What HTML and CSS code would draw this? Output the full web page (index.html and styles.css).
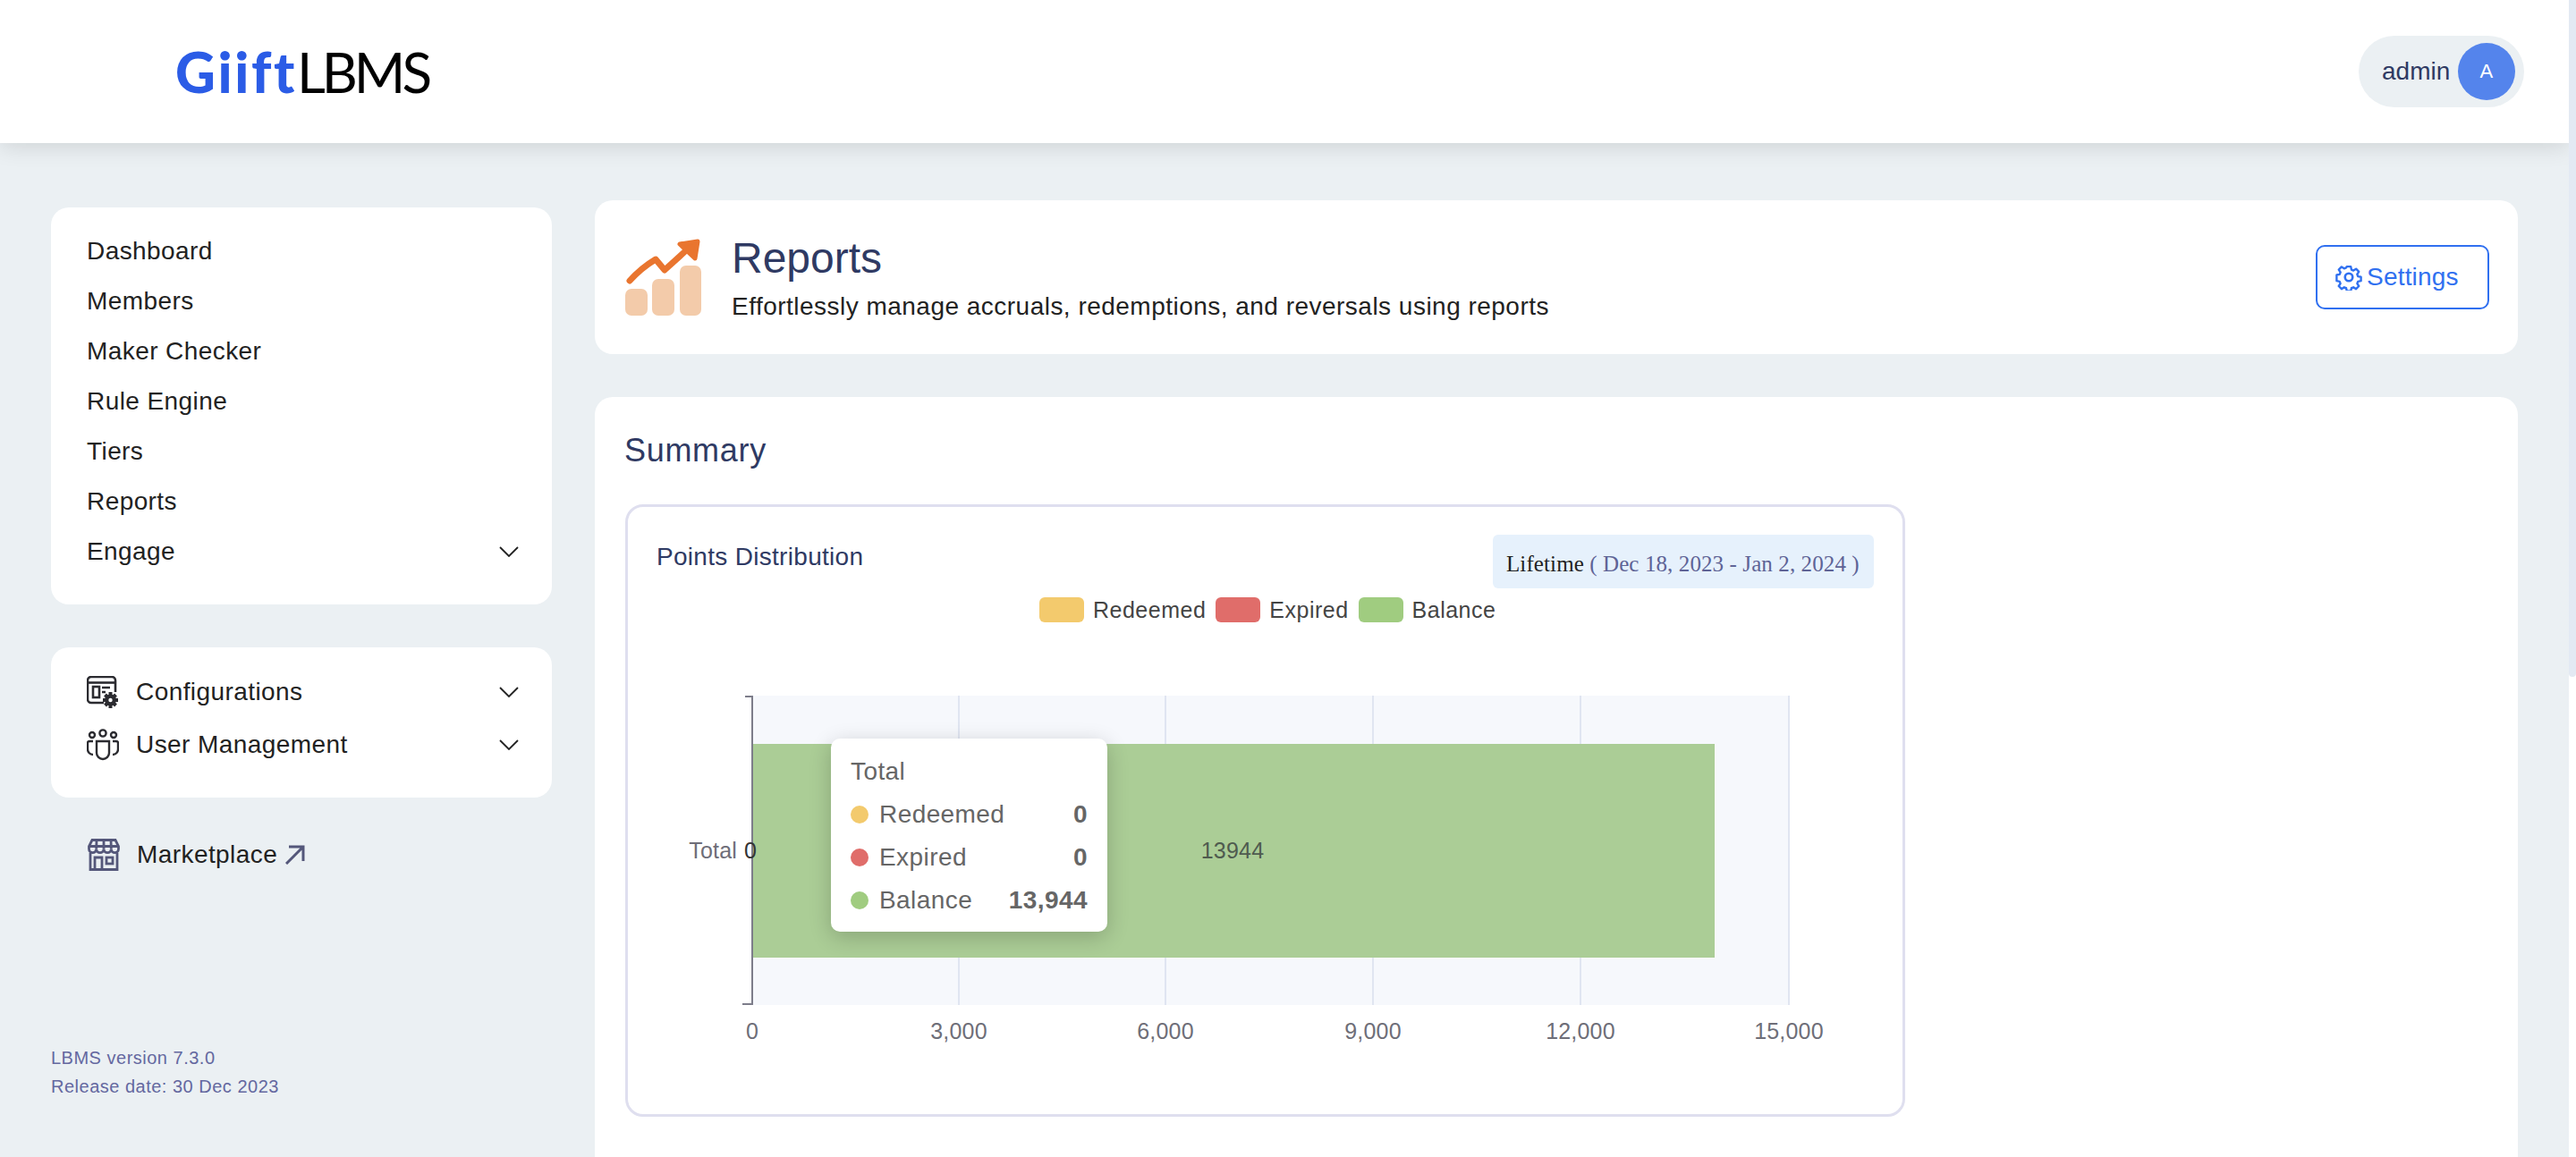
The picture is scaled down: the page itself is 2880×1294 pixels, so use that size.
FILE: index.html
```html
<!DOCTYPE html>
<html lang="en">
<head>
    <meta charset="UTF-8">
    <title>Reports</title>
    <link rel="stylesheet" href="styles.css">
</head>
<body>
<div class="page">
    <!-- header -->
    <header class="topbar">
        <div class="logo"><span class="logo-blue">Giift</span><span class="logo-black">LBMS</span></div>
        <div class="user-pill">
            <span class="user-name">admin</span>
            <span class="user-avatar">A</span>
        </div>
    </header>

    <div class="content">
        <!-- sidebar -->
        <aside class="sidebar">
            <nav class="side-card side-main">
                <a class="side-link">Dashboard</a>
                <a class="side-link">Members</a>
                <a class="side-link">Maker Checker</a>
                <a class="side-link">Rule Engine</a>
                <a class="side-link">Tiers</a>
                <a class="side-link">Reports</a>
                <a class="side-link">Engage
                    <svg class="chevron" viewBox="0 0 22 12"><path d="M1 1l10 10L21 1"/></svg>
                </a>
            </nav>

            <nav class="side-card side-config">
                <a class="side-link side-icon-link">
                    <svg class="side-icon" viewBox="0 0 36 36" fill="none" stroke="#2b2b30" stroke-width="2.600">
                        <path d="M19 30H5a4 4 0 0 1-4-4V5a4 4 0 0 1 4-4h23a4 4 0 0 1 4 4v13"/>
                        <path d="M1 7.500h31"/>
                        <rect x="7" y="12" width="7" height="12"/>
                        <path d="M17 13h9M17 18h4"/>
                        <path d="M26.500 18v18M18 27h17M20.500 21l12 12M32.500 21l-12 12" stroke="#2b2b30" stroke-width="4"/>
                        <circle cx="26.500" cy="27" r="6.500" fill="#2b2b30" stroke="none"/>
                        <circle cx="26.500" cy="27" r="2.200" fill="#fff" stroke="none"/>
                    </svg>
                    Configurations
                    <svg class="chevron" viewBox="0 0 22 12"><path d="M1 1l10 10L21 1"/></svg>
                </a>
                <a class="side-link side-icon-link">
                    <svg class="side-icon" viewBox="0 0 36 36" fill="none" stroke="#2b2b30" stroke-width="2.400">
                        <circle cx="18" cy="5" r="3.600"/>
                        <circle cx="6" cy="7" r="3"/>
                        <circle cx="30" cy="7" r="3"/>
                        <path d="M11 14h14v13a7 7 0 0 1-14 0z"/>
                        <path d="M7 14H3a2 2 0 0 0-2 2v7a6 6 0 0 0 6 6"/>
                        <path d="M29 14h4a2 2 0 0 1 2 2v7a6 6 0 0 1-6 6"/>
                    </svg>
                    User Management
                    <svg class="chevron" viewBox="0 0 22 12"><path d="M1 1l10 10L21 1"/></svg>
                </a>
            </nav>

            <a class="market-link">
                <svg class="side-icon" viewBox="0 0 36 36" fill="none" stroke="#54577a" stroke-width="2.800">
                    <path d="M5 1.500h26l3.500 7v3a4 4 0 0 1-8.200 0 4 4 0 0 1-8.300 0 4 4 0 0 1-8.300 0 4 4 0 0 1-8.200 0v-3z"/>
                    <path d="M1.500 8.500h33M10 1.500l-.3 10M18 1.500v10M26 1.500l.3 10"/>
                    <path d="M3 16v18.500h30V16"/>
                    <path d="M8 34.500V21h8v13.500"/>
                    <rect x="21" y="21" width="7" height="7"/>
                </svg>
                Marketplace
                <svg class="market-arrow" viewBox="0 0 22 22" fill="none" stroke="#54577a" stroke-width="3"><path d="M1 21L20 2M4 2h16v16"/></svg>
            </a>

            <div class="version">
                <div>LBMS version 7.3.0</div>
                <div>Release date: 30 Dec 2023</div>
            </div>
        </aside>

        <!-- main -->
        <main class="main">
            <section class="card page-head">
                <svg class="head-icon" viewBox="0 0 86 86">
                    <rect x="0" y="56" width="25" height="30" rx="7" fill="#f3cbaa"/>
                    <rect x="30" y="45" width="25" height="41" rx="7" fill="#f3cbaa"/>
                    <rect x="61" y="30" width="24" height="56" rx="7" fill="#f3cbaa"/>
                    <path d="M5 47C14 37 24 29 34 23l10 12 22-20" fill="none" stroke="#e9752f" stroke-width="7" stroke-linecap="round" stroke-linejoin="round"/>
                    <path d="M61 6l20-3-3 19z" fill="#e9752f" stroke="#e9752f" stroke-width="5" stroke-linejoin="round"/>
                </svg>
                <div class="head-text">
                    <h1 class="head-title">Reports</h1>
                    <p class="head-sub">Effortlessly manage accruals, redemptions, and reversals using reports</p>
                </div>
                <button class="settings-btn">
                    <svg class="gear" viewBox="0 0 24 24" fill="none" stroke="#3070f0" stroke-width="2.100" stroke-linejoin="round">
                        <path d="M10 1.500h4l.6 3 2 .9 2.600-1.700 2.800 2.900-1.700 2.500.8 2.100 3 .6v3.900l-3 .6-.8 2 1.700 2.600-2.800 2.800-2.600-1.700-2 .8-.6 3h-4l-.6-3-2-.8-2.600 1.700-2.800-2.800 1.700-2.600-.8-2-3-.6V9.800l3-.6.800-2.100-1.700-2.500 2.800-2.900 2.600 1.700 2-.9z" transform="translate(1.200 1.200) scale(.9)"/>
                        <circle cx="12" cy="12" r="3.400"/>
                    </svg>
                    Settings
                </button>
            </section>

            <section class="card summary">
                <h2 class="summary-title">Summary</h2>
                <div class="chart-card">
                    <div class="chart-top">
                        <div class="chart-title">Points Distribution</div>
                        <div class="date-box">Lifetime <span class="date-range">( Dec 18, 2023 - Jan 2, 2024 )</span></div>
                    </div>
                    <div class="legend">
                        <span class="swatch swatch-yellow"></span><span class="legend-label">Redeemed</span>
                        <span class="swatch swatch-red"></span><span class="legend-label">Expired</span>
                        <span class="swatch swatch-green"></span><span class="legend-label">Balance</span>
                    </div>
                    <div class="chart-wrap">
                        <svg class="chart-svg" viewBox="0 0 1424 420" width="1424" height="420">
                            <rect x="139" y="0" width="1160" height="346" fill="#f6f8fc"/>
                            <path d="M370 0v346M601 0v346M833 0v346M1065 0v346M1298 0v346" stroke="#e0e5f1" stroke-width="2"/>
                            <rect x="138" y="54" width="1077" height="239" fill="#abcd96"/>
                            <path d="M139 0v346M131 1h8M128 345h11" stroke="#7d7d8a" stroke-width="2" fill="none"/>
                            <text class="chart-text" x="122" y="182" text-anchor="end">Total</text>
                            <text class="chart-text chart-zero" x="137" y="182" text-anchor="middle">0</text>
                            <text class="chart-text chart-value" x="676" y="182" text-anchor="middle">13944</text>
                            <text class="chart-text" x="139" y="384" text-anchor="middle">0</text>
                            <text class="chart-text" x="370" y="384" text-anchor="middle">3,000</text>
                            <text class="chart-text" x="601" y="384" text-anchor="middle">6,000</text>
                            <text class="chart-text" x="833" y="384" text-anchor="middle">9,000</text>
                            <text class="chart-text" x="1065" y="384" text-anchor="middle">12,000</text>
                            <text class="chart-text" x="1298" y="384" text-anchor="middle">15,000</text>
                        </svg>
                        <!-- tooltip sits over the bar -->
                        <div class="tooltip">
                            <div class="tip-title">Total</div>
                            <div class="tip-row"><span class="tip-dot swatch-yellow"></span><span class="tip-label">Redeemed</span><b class="tip-value">0</b></div>
                            <div class="tip-row"><span class="tip-dot swatch-red"></span><span class="tip-label">Expired</span><b class="tip-value">0</b></div>
                            <div class="tip-row"><span class="tip-dot swatch-green"></span><span class="tip-label">Balance</span><b class="tip-value">13,944</b></div>
                        </div>
                    </div>
                </div>
            </section>
        </main>
    </div>
</div>
<div class="scrollbar"><div class="scroll-thumb"></div></div>
</body>
</html>
```

FILE: styles.css
```css
*{
    margin: 0;
    padding: 0;
    box-sizing: border-box;
}
html, body{
    height: 100%;
    overflow: hidden;
}
body{
    display: flex;
    background-color: #ebf0f3;
    font-family: "Liberation Sans", Arial, sans-serif;
    font-size: 28px;
    letter-spacing: 0.42px;
    color: #222;
}
.page{
    flex: 1;
    min-width: 0;
    height: 100%;
    overflow: hidden;
}
.scrollbar{
    width: 8px;
    background-color: #fff;
}
.scroll-thumb{
    height: 757px;
    background-color: #e3e9f3;
    border-radius: 0 0 4px 4px;
}

/* header */
.topbar{
    height: 160px;
    background-color: #fff;
    box-shadow: 0 4px 24px rgba(0, 0, 0, 0.12);
    display: flex;
    align-items: center;
    justify-content: space-between;
    padding: 0 50px 0 196px;
    position: relative;
}
.logo{
    font-family: Lato, sans-serif;
    font-size: 62px;
    letter-spacing: 0;
    line-height: 1;
    display: flex;
}
.logo-blue{
    color: #2b5ce6;
    font-weight: 900;
    letter-spacing: 2.600px;
}
.logo-black{
    color: #000;
    font-weight: 400;
    letter-spacing: -4px;
}
.user-pill{
    width: 185px;
    height: 80px;
    border-radius: 40px;
    background-color: #ebf0f3;
    display: flex;
    align-items: center;
    justify-content: space-between;
    padding: 0 10px 0 26px;
}
.user-name{
    color: #2f3a63;
    letter-spacing: 0;
}
.user-avatar{
    width: 64px;
    height: 64px;
    border-radius: 50%;
    background-color: #5484ec;
    color: #fff;
    font-size: 22px;
    display: flex;
    align-items: center;
    justify-content: center;
}

/* layout */
.content{
    display: flex;
    align-items: flex-start;
    padding: 64px 57px 0;
    gap: 48px;
}
.sidebar{
    width: 560px;
    flex-shrink: 0;
    padding-top: 8px;
}
.main{
    flex: 1;
    min-width: 0;
}

/* sidebar */
.side-card{
    background-color: #fff;
    border-radius: 20px;
    padding: 21px 40px;
}
.side-main{
    height: 444px;
}
.side-config{
    height: 168px;
    margin-top: 48px;
    padding-top: 20px;
}
.side-link{
    height: 56px;
    display: flex;
    align-items: center;
    color: #222;
}
.side-icon-link{
    height: 59px;
    gap: 19px;
}
.side-icon{
    width: 36px;
    height: 36px;
    flex-shrink: 0;
}
.chevron{
    width: 22px;
    height: 12px;
    margin-left: auto;
    margin-right: -3px;
    fill: none;
    stroke: #222;
    stroke-width: 1.800;
}
.market-link{
    display: flex;
    align-items: center;
    gap: 19px;
    margin: 46px 0 0 41px;
    height: 36px;
}
.market-arrow{
    width: 22px;
    height: 22px;
    margin-left: -10px;
}
.version{
    margin-top: 193px;
    font-size: 20px;
    letter-spacing: 0.5px;
    line-height: 32px;
    color: #6468a0;
}

/* cards */
.card{
    background-color: #fff;
    border-radius: 20px;
}
.page-head{
    height: 172px;
    display: flex;
    align-items: center;
    padding: 0 32px 0 34px;
}
.head-icon{
    width: 86px;
    height: 86px;
    flex-shrink: 0;
}
.head-text{
    margin-left: 33px;
    flex: 1;
}
.head-title{
    font-size: 48px;
    font-weight: 400;
    letter-spacing: 0;
    line-height: 56px;
    color: #2f3a63;
}
.head-sub{
    margin-top: 10px;
    line-height: 32px;
    letter-spacing: 0.48px;
    color: #222;
}
.settings-btn{
    width: 194px;
    height: 72px;
    background-color: #fff;
    border: 2px solid #3070f0;
    border-radius: 10px;
    color: #3070f0;
    font: inherit;
    letter-spacing: 0.2px;
    display: flex;
    align-items: center;
    padding-left: 20px;
    gap: 5px;
}
.gear{
    width: 30px;
    height: 30px;
}
.summary{
    margin-top: 48px;
    height: 900px;
    padding: 38px 34px;
}
.summary-title{
    margin-left: -1px;
    font-size: 36px;
    font-weight: 400;
    letter-spacing: 0.7px;
    line-height: 44px;
    color: #2f3a63;
}
.chart-card{
    width: 1431px;
    height: 685px;
    margin-top: 38px;
    border: 3px solid #dfdfef;
    border-radius: 20px;
    padding: 31px 32px 0 0;
    position: relative;
}
.chart-top{
    display: flex;
    justify-content: space-between;
    align-items: flex-start;
    height: 60px;
}
.chart-title{
    margin: 7px 0 0 32px;
    line-height: 36px;
    letter-spacing: 0.3px;
    color: #2f3a63;
}
.date-box{
    width: 426px;
    height: 60px;
    padding: 18px 0 0 15px;
    background-color: #e6f1fc;
    border-radius: 6px;
    font-family: "Liberation Serif", "Times New Roman", serif;
    font-size: 25px;
    letter-spacing: 0.1px;
    line-height: 30px;
    color: #222;
    white-space: nowrap;
}
.date-range{
    color: #5e6396;
}
.legend{
    display: flex;
    align-items: center;
    margin: 10px 0 0 460px;
    height: 28px;
    font-size: 25px;
    letter-spacing: 0.5px;
    color: #444;
}
.swatch{
    width: 50px;
    height: 28px;
    border-radius: 6px;
}
.swatch-yellow{
    background-color: #f3ca6d;
}
.swatch-red{
    background-color: #e06d6a;
}
.swatch-green{
    background-color: #a0cc80;
}
.legend-label{
    margin: 0 11px 0 10px;
}
.chart-wrap{
    position: relative;
    margin-top: 82px;
}
.chart-svg{
    display: block;
}
.chart-text{
    font-family: "Liberation Sans", Arial, sans-serif;
    font-size: 25px;
    letter-spacing: 0.2px;
    fill: #6e6e78;
}
.chart-zero{
    fill: #333;
}
.chart-value{
    font-size: 25px;
    fill: #4f5b4f;
}
.tooltip{
    position: absolute;
    left: 227px;
    top: 48px;
    width: 309px;
    height: 216px;
    padding: 19px 22px 0 22px;
    background-color: #fff;
    border-radius: 10px;
    box-shadow: 0 6px 24px rgba(0, 0, 0, 0.2);
    color: #666;
}
.tip-title{
    line-height: 36px;
}
.tip-row{
    display: flex;
    align-items: center;
    height: 48px;
}
.tip-title + .tip-row{
    margin-top: 6px;
}
.tip-dot{
    width: 20px;
    height: 20px;
    border-radius: 50%;
    margin-right: 12px;
}
.tip-value{
    margin-left: auto;
}
```
